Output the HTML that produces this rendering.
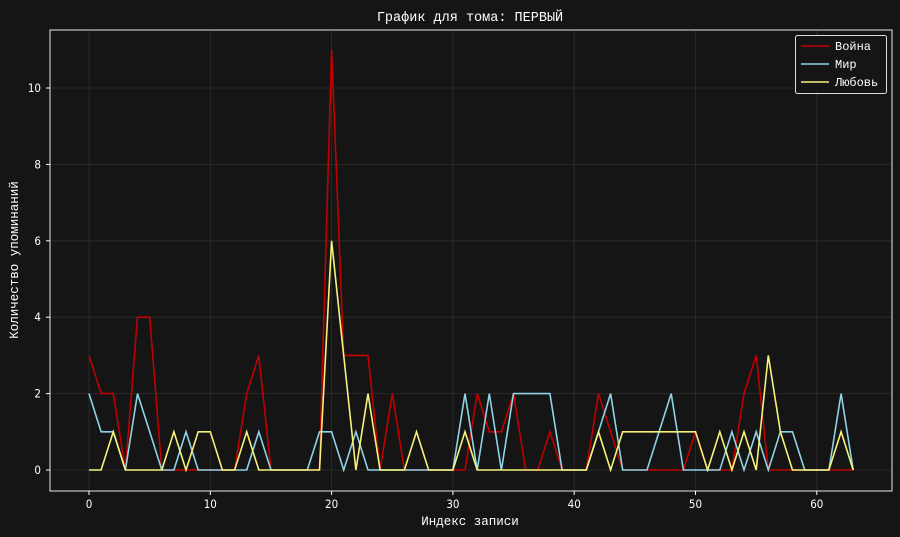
<!DOCTYPE html>
<html><head><meta charset="utf-8"><style>
html,body{margin:0;padding:0;background:#151515;}
svg{display:block;font-family:"Liberation Mono","DejaVu Sans Mono",monospace;}
.tl{font-family:"DejaVu Sans","Liberation Sans",sans-serif;font-stretch:condensed;}
</style></head><body>
<svg id="s" width="900" height="537" xmlns="http://www.w3.org/2000/svg">
<rect width="900" height="537" fill="#151515"/>
<g id="grid" stroke="#2e2e2e" stroke-width="0.8"></g>
<g id="lines" fill="none" stroke-width="1.6" stroke-linejoin="miter"></g>
<rect x="50" y="30" width="842" height="461" fill="none" stroke="#e8e8e8" stroke-width="1"/>
<g id="ticks" stroke="#fff" stroke-width="1"></g>
<g id="labels" class="tl" fill="#fff" font-size="11.5"></g>
<text x="470" y="21" fill="#fff" font-size="13.5" text-anchor="middle">График для тома: ПЕРВЫЙ</text>
<text x="470" y="525" fill="#fff" font-size="12.5" text-anchor="middle">Индекс записи</text>
<text transform="translate(18,260) rotate(-90)" fill="#fff" font-size="12.5" text-anchor="middle">Количество упоминаний</text>
<rect x="795.5" y="35.5" width="91" height="58" rx="2" fill="#151515" stroke="#ddd" stroke-width="1"/>
<line x1="801" y1="46" x2="829" y2="46" stroke="#c00000" stroke-width="1.6"/>
<line x1="801" y1="64" x2="829" y2="64" stroke="#8fd3e6" stroke-width="1.6"/>
<line x1="801" y1="82" x2="829" y2="82" stroke="#f7f37a" stroke-width="1.6"/>
<text x="835" y="50" fill="#fff" font-size="12">Война</text>
<text x="835" y="68" fill="#fff" font-size="12">Мир</text>
<text x="835" y="86" fill="#fff" font-size="12">Любовь</text>
</svg>
<script>
var px=function(x){return 89+12.13*x},py=function(y){return 470-38.2*y};
var red=[3,2,2,0,4,4,0,0,0,0,0,0,0,2,3,0,0,0,0,0,11,3,3,3,0,2,0,0,0,0,0,0,2,1,1,2,0,0,1,0,0,0,2,1,0,0,0,0,0,0,1,0,0,0,2,3,0,0,0,0,0,0,0,0];
var blue=[2,1,1,0,2,1,0,0,1,0,0,0,0,0,1,0,0,0,0,1,1,0,1,0,0,0,0,0,0,0,0,2,0,2,0,2,2,2,2,0,0,0,1,2,0,0,0,1,2,0,0,0,0,1,0,1,0,1,1,0,0,0,2,0];
var yel=[0,0,1,0,0,0,0,1,0,1,1,0,0,1,0,0,0,0,0,0,6,3,0,2,0,0,0,1,0,0,0,1,0,0,0,0,0,0,0,0,0,0,1,0,1,1,1,1,1,1,1,0,1,0,1,0,3,1,0,0,0,0,1,0];
var ns="http://www.w3.org/2000/svg";
function el(p,t,a){var e=document.createElementNS(ns,t);for(var k in a)e.setAttribute(k,a[k]);document.getElementById(p).appendChild(e);return e;}
[[red,"#c00000"],[blue,"#8fd3e6"],[yel,"#f7f37a"]].forEach(function(d){
 el("lines","polyline",{points:d[0].map(function(v,i){return px(i).toFixed(1)+","+py(v).toFixed(1)}).join(" "),stroke:d[1]});
});
for(var x=0;x<=60;x+=10){var X=px(x);el("grid","line",{x1:X,y1:30,x2:X,y2:491});el("ticks","line",{x1:X,y1:491,x2:X,y2:495});
 el("labels","text",{x:X,y:508,"text-anchor":"middle"}).textContent=x;}
for(var y=0;y<=10;y+=2){var Y=py(y);el("grid","line",{x1:50,y1:Y,x2:892,y2:Y});el("ticks","line",{x1:46,y1:Y,x2:50,y2:Y});
 el("labels","text",{x:41,y:Y+4,"text-anchor":"end"}).textContent=y;}
</script>
</body></html>
